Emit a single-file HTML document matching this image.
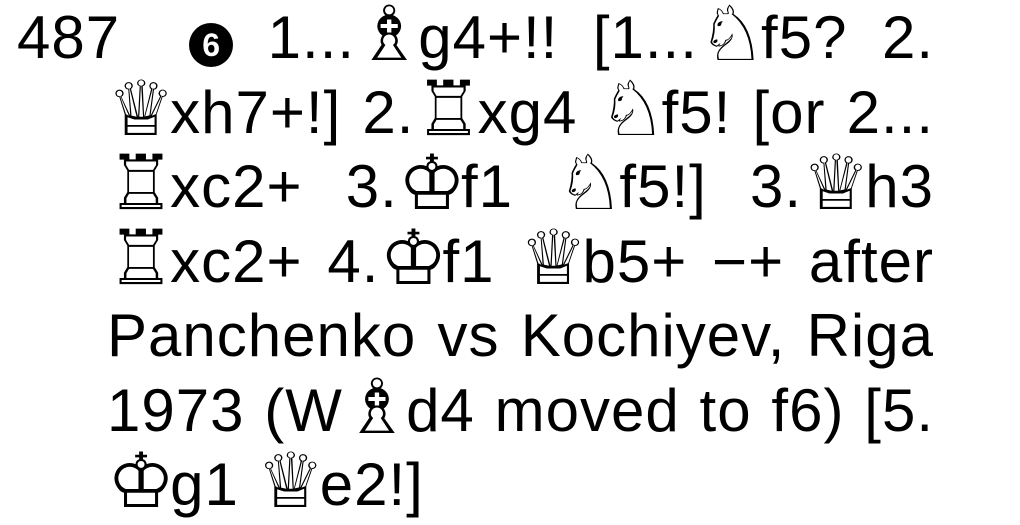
<!DOCTYPE html>
<html><head><meta charset="utf-8"><style>
html,body{margin:0;padding:0;background:#fff;width:1020px;height:521px;overflow:hidden}
.t{position:absolute;left:0;top:0;font-family:"Liberation Sans","DejaVu Sans",sans-serif;font-size:60px;color:#000;line-height:74.5px;white-space:nowrap}
.l{position:absolute;left:107px;width:827px;text-align:justify;text-align-last:justify;white-space:normal;height:74.5px;overflow:visible;letter-spacing:1px}
.f{left:17px;width:917px}
.n{text-align:left;text-align-last:left}
.p{font-family:"DejaVu Sans",sans-serif;font-size:76px;line-height:0;font-weight:bold;letter-spacing:-5px;vertical-align:-2px}
.c{display:inline-block;width:44px;height:44px;border-radius:50%;background:#000;color:#fff;font-size:32px;line-height:44px;text-align:center;text-align-last:center;vertical-align:2px;font-weight:bold;letter-spacing:0}
</style></head><body>
<div class="t">
<div class="l f" style="top:1px">487&nbsp; <span class="c">6</span> 1...<span class="p">♗</span>g4+!! [1...<span class="p">♘</span>f5? 2.</div>
<div class="l" style="top:75.5px"><span class="p">♕</span>xh7+!] 2.<span class="p">♖</span>xg4 <span class="p">♘</span>f5! [or 2...</div>
<div class="l" style="top:150px"><span class="p">♖</span>xc2+ 3.<span class="p">♔</span>f1 <span class="p">♘</span>f5!] 3.<span class="p">♕</span>h3</div>
<div class="l" style="top:224.5px"><span class="p">♖</span>xc2+ 4.<span class="p">♔</span>f1 <span class="p">♕</span>b5+ −+ after</div>
<div class="l" style="top:299px">Panchenko vs Kochiyev, Riga</div>
<div class="l" style="top:373.5px">1973 (W<span class="p">♗</span>d4 moved to f6) [5.</div>
<div class="l n" style="top:448px"><span class="p">♔</span>g1 <span class="p">♕</span>e2!]</div>
</div>
</body></html>
